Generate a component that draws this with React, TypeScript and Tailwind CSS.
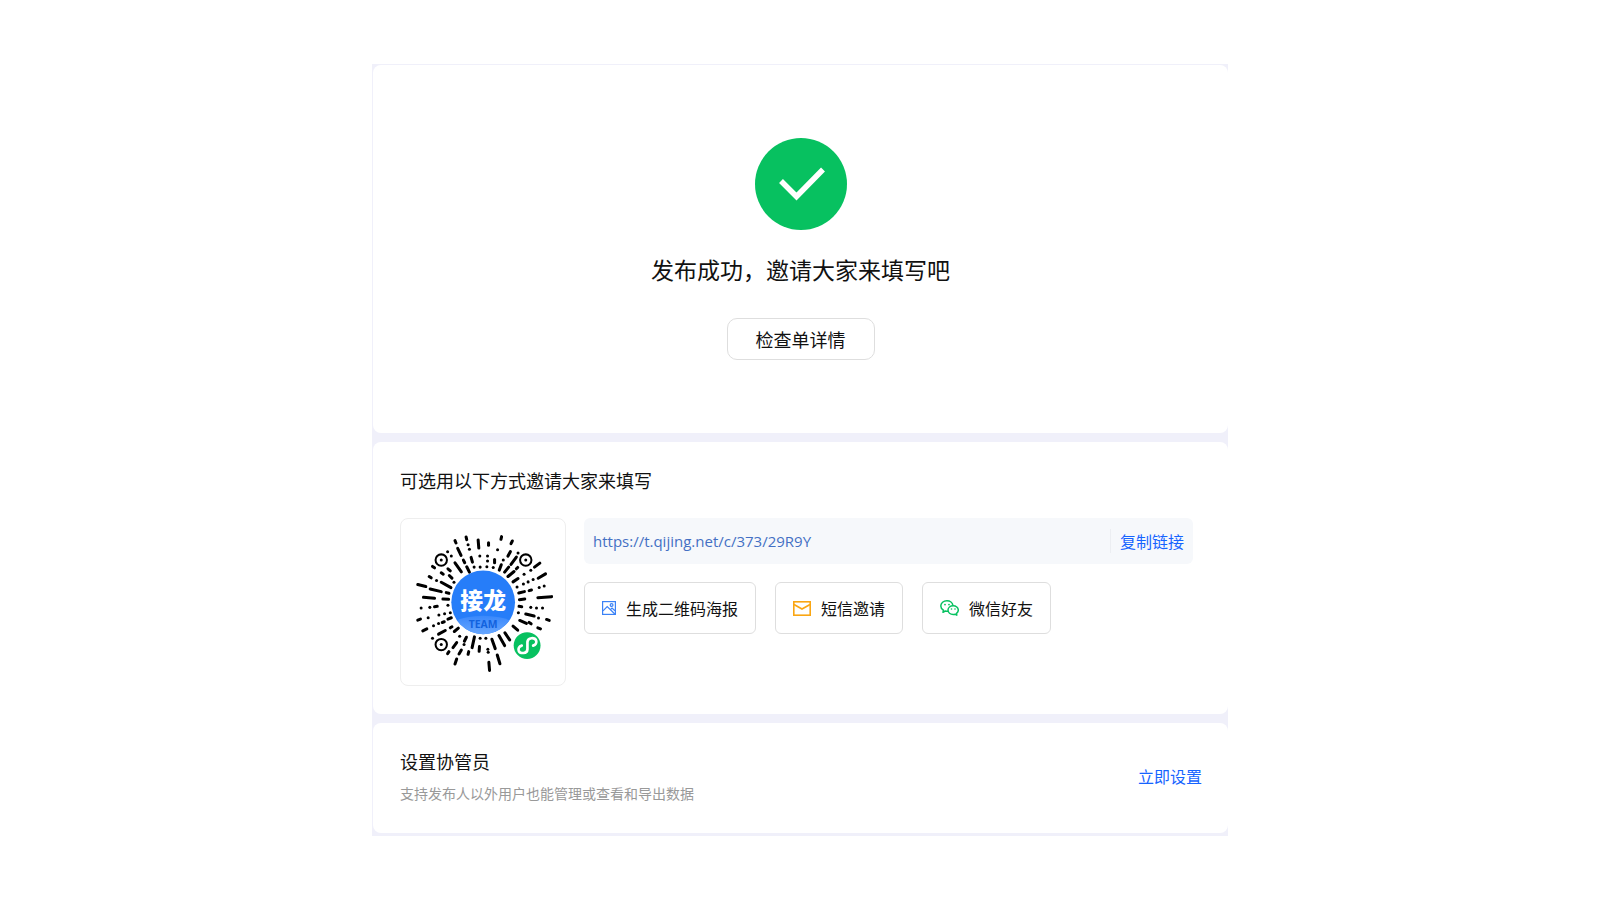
import type { ReactNode } from "react";

// short strokes radiating around the logo: x1, y1, x2, y2
const RAYS: number[][] = [
  [179, 78, 182, 85], [212, 67, 214, 75], [248, 76, 250, 100], [187, 101, 197, 122],
  [204, 136, 208, 144], [227, 128, 231, 142], [179, 144, 198, 171], [214, 156, 222, 172],
  [112, 155, 118, 159], [138, 174, 144, 178], [158, 162, 165, 168], [162, 182, 170, 190],
  [102, 185, 108, 189], [138, 202, 167, 218], [68, 209, 92, 215], [105, 222, 138, 230],
  [153, 233, 161, 235], [85, 247, 118, 250], [143, 252, 160, 253],
  [318, 66, 316, 74], [279, 84, 279, 92], [350, 79, 346, 87], [344, 111, 337, 124],
  [317, 150, 311, 166], [297, 134, 297, 144], [362, 127, 346, 149], [339, 157, 327, 172],
  [366, 158, 362, 162], [355, 170, 337, 185], [367, 191, 352, 201], [432, 145, 416, 157],
  [449, 177, 427, 190], [369, 234, 386, 230], [400, 227, 407, 225], [426, 248, 467, 245],
  [371, 254, 387, 252],
  [118, 275, 126, 274], [68, 315, 76, 312], [83, 347, 95, 341], [141, 322, 147, 320],
  [158, 312, 168, 308], [130, 357, 150, 346], [165, 338, 170, 335], [177, 349, 189, 339],
  [161, 409, 157, 415], [173, 397, 184, 382], [184, 431, 179, 446], [198, 404, 191, 416],
  [213, 366, 207, 378], [237, 365, 230, 397], [220, 409, 218, 417], [252, 394, 251, 408],
  [280, 441, 282, 465], [289, 372, 299, 400], [305, 419, 313, 445], [310, 361, 327, 391],
  [328, 353, 342, 374], [390, 297, 415, 303], [452, 313, 460, 316], [372, 316, 392, 325],
  [352, 333, 366, 345], [400, 322, 406, 326], [426, 338, 434, 341], [370, 274, 378, 275],
];

const DOTS: number[][] = [
  [218, 90], [222, 104], [157, 111], [168, 124], [253, 124], [236, 157], [254, 157], [176, 202],
  [124, 197], [306, 105], [276, 124], [276, 139], [274, 156], [323, 136], [293, 158], [367, 115],
  [405, 166], [385, 178], [412, 194], [397, 201], [383, 207], [364, 216], [430, 218], [445, 213],
  [78, 279], [104, 277], [158, 271], [99, 308], [131, 300], [148, 296], [165, 293], [115, 332],
  [130, 325], [112, 369], [206, 388], [193, 363], [254, 369], [271, 369], [277, 402], [278, 411],
  [405, 277], [422, 279], [440, 279], [368, 293], [428, 309],
];

const RINGS: number[][] = [[138, 136], [390, 136], [138, 388]];

function MiniProgramCode() {
  return (
    <svg viewBox="18 14 489 494" className="block h-full w-full" role="img" aria-label="小程序码">
      <defs>
        <linearGradient id="logoBase" x1="0" y1="0" x2="0" y2="1">
          <stop offset="0" stopColor="#3a88fb" />
          <stop offset="0.5" stopColor="#6ba9ff" />
        </linearGradient>
        <clipPath id="logoClip">
          <circle cx="263" cy="262" r="95" />
        </clipPath>
      </defs>
      <g stroke="#000" strokeWidth="9" strokeLinecap="round">
        {RAYS.map(([x1, y1, x2, y2]) => (
          <line key={`${x1}-${y1}`} x1={x1} y1={y1} x2={x2} y2={y2} />
        ))}
      </g>
      {DOTS.map(([x, y]) => (
        <circle key={`${x}-${y}`} cx={x} cy={y} r="4.5" />
      ))}
      {RINGS.map(([x, y]) => (
        <g key={`${x}-${y}`}>
          <circle cx={x} cy={y} r="17" fill="#fff" stroke="#000" strokeWidth="6" />
          <circle cx={x} cy={y} r="4.5" />
        </g>
      ))}
      <circle cx="263" cy="262" r="95" fill="#267df9" />
      <g clipPath="url(#logoClip)">
        <ellipse cx="263" cy="362" rx="125" ry="60" fill="url(#logoBase)" />
      </g>
      <text
        x="263"
        y="283"
        textAnchor="middle"
        fontSize="68"
        fontWeight="900"
        fill="#fff"
        className="font-['Noto_Sans_CJK_SC',sans-serif]"
      >
        接龙
      </text>
      <text
        x="263"
        y="338"
        textAnchor="middle"
        fontSize="31"
        fontWeight="700"
        fill="#1262de"
        className="font-['Open_Sans',sans-serif]"
      >
        TEAM
      </text>
      <circle cx="394" cy="391" r="40" fill="#07c160" />
      <path
        d="M378 391c-8 2-11 9-9 15 4 10 25 10 26-4v-22c1-14 22-14 26-4 2 6-1 13-9 15"
        fill="none"
        stroke="#fff"
        strokeWidth="8"
        strokeLinecap="round"
      />
    </svg>
  );
}

function PosterIcon() {
  return (
    <svg viewBox="0 0 14 14" className="size-[14px]" fill="none" stroke="#3b82f6" strokeWidth="1.2" aria-hidden="true">
      <rect x="0.6" y="0.6" width="12.8" height="12.8" />
      <circle cx="9.6" cy="4" r="1.4" />
      <path d="M1 9.8L5.2 5.6l7.6 7.4M8.4 8.6l1.6-1.5 3 2.7" />
    </svg>
  );
}

function MailIcon() {
  return (
    <svg viewBox="0 0 18 15" className="h-[15px] w-[18px]" fill="none" stroke="#faa613" strokeWidth="1.6" aria-hidden="true">
      <rect x="0.8" y="0.8" width="16.4" height="13.4" />
      <path d="M1 3.5l8 4.5 8-4.5" />
    </svg>
  );
}

function WechatIcon() {
  return (
    <svg viewBox="0 0 19 16" className="h-4 w-[19px]" fill="none" stroke="#07c160" strokeWidth="1.5" strokeLinejoin="round" aria-hidden="true">
      <path d="M8 11.2c-.9.1-1.8 0-2.7-.2L3 12.3l.4-2.2C1.8 9.1.8 7.6.8 5.9.8 3.1 3.5.8 6.9.8c3.1 0 5.7 2 6 4.6" />
      <path d="M13.2 5.7c-2.900 0-5.200 2-5.200 4.400s2.300 4.400 5.200 4.400c.7 0 1.300-.1 1.900-.3l1.700 1-.3-1.800c1.100-.8 1.800-2 1.800-3.300 0-2.400-2.300-4.400-5.100-4.400z" />
      <g fill="#07c160" stroke="none">
        <circle cx="5" cy="4.6" r="0.9" />
        <circle cx="9" cy="4.6" r="0.9" />
        <circle cx="11.5" cy="9" r="0.8" />
        <circle cx="15" cy="9" r="0.8" />
      </g>
    </svg>
  );
}

function ShareButton({ icon, label }: { icon: ReactNode; label: string }) {
  return (
    <button
      type="button"
      className="flex cursor-pointer items-center gap-[10px] rounded-md border border-[#dedede] bg-white px-[17px] py-[13px] text-base leading-6 hover:bg-gray-50"
    >
      {icon}
      <span>{label}</span>
    </button>
  );
}

export default function App() {
  return (
    <div className="min-h-screen bg-white px-4 py-16 font-['Noto_Sans_CJK_SC',sans-serif] text-[#111]">
      <main className="mx-auto flex max-w-[856px] flex-col gap-[9px] bg-[#f0f0fa] pt-px pb-[3px] pl-px">
        <section className="flex flex-col items-center rounded-lg bg-white pt-[73px] pb-[73px]">
          <svg viewBox="0 0 92 92" className="size-[92px]" aria-hidden="true">
            <circle cx="46" cy="46" r="46" fill="#07c160" />
            <path d="M26 43l15.5 15.5L68 31.5" fill="none" stroke="#fff" strokeWidth="5.5" />
          </svg>
          <h1 className="mt-[21px] text-[23px] leading-9">发布成功，邀请大家来填写吧</h1>
          <button
            type="button"
            className="mt-[31px] cursor-pointer rounded-[10px] border border-[#dedede] bg-white px-7 py-[6px] text-lg leading-7 hover:bg-gray-50"
          >
            检查单详情
          </button>
        </section>

        <section className="rounded-lg bg-white pt-6 pr-[35px] pb-7 pl-[27px]">
          <h2 className="text-lg leading-7">可选用以下方式邀请大家来填写</h2>
          <div className="mt-6 flex items-start gap-[18px]">
            <div className="h-[168px] w-[166px] shrink-0 overflow-hidden rounded-lg border border-[#eee]">
              <MiniProgramCode />
            </div>
            <div className="min-w-0 flex-1">
              <div className="flex items-center rounded-md bg-[#f6f8fb] px-[9px] py-[11px]">
                <a
                  href="https://t.qijing.net/c/373/29R9Y"
                  className="min-w-0 flex-1 truncate font-['Open_Sans',sans-serif] text-[15px] leading-6 text-[#4470c4]"
                >
                  https://t.qijing.net/c/373/29R9Y
                </a>
                <button
                  type="button"
                  className="cursor-pointer border-l border-[#eceef2] pl-[9px] text-base leading-6 text-[#1664ff]"
                >
                  复制链接
                </button>
              </div>
              <div className="mt-[18px] flex flex-wrap gap-[19px]">
                <ShareButton icon={<PosterIcon />} label="生成二维码海报" />
                <ShareButton icon={<MailIcon />} label="短信邀请" />
                <ShareButton icon={<WechatIcon />} label="微信好友" />
              </div>
            </div>
          </div>
        </section>

        <section className="flex items-center justify-between rounded-lg bg-white pt-6 pr-[26px] pb-7 pl-[27px]">
          <div>
            <h2 className="text-lg leading-7">设置协管员</h2>
            <p className="mt-[6px] text-sm leading-6 text-[#999]">支持发布人以外用户也能管理或查看和导出数据</p>
          </div>
          <button type="button" className="cursor-pointer text-base leading-6 text-[#1664ff]">
            立即设置
          </button>
        </section>
      </main>
    </div>
  );
}
